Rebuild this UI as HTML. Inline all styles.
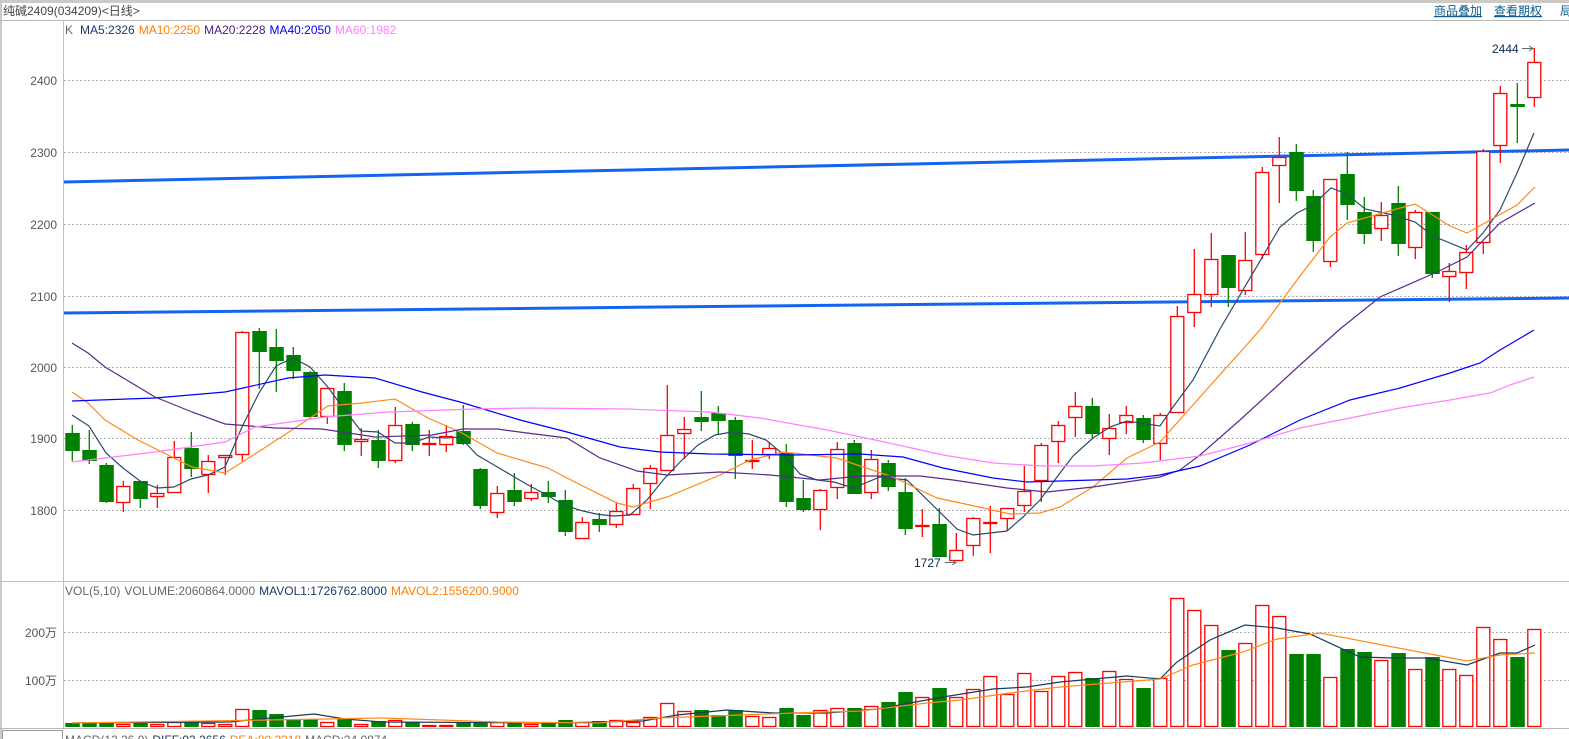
<!DOCTYPE html>
<html><head><meta charset="utf-8"><style>
html,body{margin:0;padding:0;background:#fff;width:1569px;height:739px;overflow:hidden;font-family:"Liberation Sans","Noto Sans CJK SC",sans-serif;}
svg text{font-family:"Liberation Sans","Noto Sans CJK SC",sans-serif;}
</style></head><body>
<svg id="s" width="1569" height="739" xmlns="http://www.w3.org/2000/svg" style="position:absolute;left:0;top:0">
<rect x="0" y="0" width="1569" height="3" fill="#cdc9c5"/>
<rect x="0" y="0" width="2" height="739" fill="#cdc9c5"/>
<line x1="0" y1="20.5" x2="1569" y2="20.5" stroke="#b8b8b8"/>
<text x="3" y="15" font-size="12" fill="#444">纯碱2409(034209)&lt;日线&gt;</text>
<text x="1434" y="15" font-size="12" fill="#0b5b8c" text-decoration="underline">商品叠加</text>
<text x="1494" y="15" font-size="12" fill="#0b5b8c" text-decoration="underline">查看期权</text>
<text x="1560" y="15" font-size="12" fill="#0b5b8c">局</text>
<line x1="63.5" y1="21" x2="63.5" y2="729" stroke="#c0c0c0"/>
<line x1="0" y1="581.5" x2="1569" y2="581.5" stroke="#c0c0c0"/>
<line x1="0" y1="728.5" x2="1569" y2="728.5" stroke="#b8b8b8"/>
<rect x="2.5" y="730.5" width="60" height="12" fill="none" stroke="#999"/>
<text x="65" y="34" font-size="12"><tspan fill="#666">K</tspan><tspan fill="#1a3a6a" dx="7">MA5:2326</tspan><tspan fill="#ff8000" dx="4">MA10:2250</tspan><tspan fill="#4b1a82" dx="4">MA20:2228</tspan><tspan fill="#0000ee" dx="4">MA40:2050</tspan><tspan fill="#ff80ff" dx="4">MA60:1982</tspan></text>
<text x="65" y="595" font-size="12"><tspan fill="#666">VOL(5,10)</tspan><tspan fill="#666" dx="4">VOLUME:2060864.0000</tspan><tspan fill="#1a3a6a" dx="4">MAVOL1:1726762.8000</tspan><tspan fill="#ff8000" dx="4">MAVOL2:1556200.9000</tspan></text>
<text x="65" y="744" font-size="12"><tspan fill="#666">MACD(12,26,9)</tspan><tspan fill="#1a3a6a" dx="4">DIFF:93.2656</tspan><tspan fill="#ff8000" dx="4">DEA:80.2318</tspan><tspan fill="#666" dx="4">MACD:24.0874</tspan></text>
<g id="g"></g>
</svg>
<script>
var g=document.getElementById('g');var h='';
function L(x1,y1,x2,y2,c,w,d){h+='<line x1="'+x1+'" y1="'+y1+'" x2="'+x2+'" y2="'+y2+'" stroke="'+c+'" stroke-width="'+(w||1)+'"'+(d?' stroke-dasharray="'+d+'"':'')+'/>';}
// grid
[[80,'2400'],[152,'2300'],[224,'2200'],[296,'2100'],[367,'2000'],[438,'1900'],[510,'1800']].forEach(function(a){L(64,a[0]+.5,1569,a[0]+.5,'#b0b0b0',1,'2,2');h+='<text x="57" y="'+(a[0]+5)+'" font-size="12" fill="#555" text-anchor="end">'+a[1]+'</text>';});
[[632,'200万'],[680,'100万']].forEach(function(a){L(64,a[0]+.5,1569,a[0]+.5,'#b0b0b0',1,'2,2');h+='<text x="57" y="'+(a[0]+5)+'" font-size="12" fill="#555" text-anchor="end">'+a[1]+'</text>';});
// trend lines
L(64,182,1569,150,'#1464f0',3);L(64,313,1569,298,'#1464f0',3);
// candles: [color, wickTop, bodyTop, bodyBot, wickBot]
var C=[['G',425,433,451,461],['G',430,450,461,464],['G',463,465,502,503],['R',481,486,503,512],['G',481,481,499,508],['R',485,493,497,508],['R',441,457,493,493],['G',432,448,469,477],['R',455,461,475,493],['R',455,455,458,475],
['R',331,332,455,461],['G',328,331,352,389],['G',329,347,361,392],['G',347,355,371,379],['G',371,372,417,417],['R',388,388,417,424],['G',383,391,445,451],['R',428,439,442,456],['G',430,440,461,468],['R',407,425,461,463],
['G',422,424,445,451],['R',430,443,445,456],['R',425,436,445,452],['G',405,431,444,445],['G',468,469,506,509],['R',486,493,513,518],['G',473,490,502,506],['R',484,492,499,501],['G',481,492,497,503],['G',490,500,532,536],
['R',517,522,539,539],['G',513,519,525,532],['R',502,511,525,528],['R',484,488,515,515],['R',465,468,484,509],['R',385,435,471,471],['R',417,429,434,459],['G',391,417,422,431],['G',406,413,421,435],['G',417,420,456,479],
['R',440,460,462,469],['R',442,448,455,459],['G',444,453,502,507],['G',480,498,510,512],['R',489,490,510,530],['R',442,449,488,499],['G',440,443,494,494],['R',450,459,493,499],['G',460,463,487,491],['G',478,492,529,535],
['R',509,525,527,537],['G',508,524,557,557],['R',533,550,561,561],['R',517,518,546,556],['R',506,522,524,553],['R',508,508,519,531],['R',466,491,506,512],['R',443,445,481,502],['R',421,425,442,463],['R',392,406,418,437],
['G',398,406,434,439],['R',414,428,439,455],['R',406,415,423,434],['G',415,418,440,443],['R',413,415,444,460],['R',306,316,413,413],['R',249,294,313,327],['R',233,259,295,307],['G',255,255,288,307],['R',232,260,291,295],
['R',167,172,255,259],['R',137,157,166,203],['G',144,152,191,201],['G',190,196,241,252],['R',179,179,262,267],['G',152,174,205,220],['G',197,212,234,244],['R',202,215,229,241],['G',186,203,244,256],['R',210,212,248,259],
['G',212,212,274,278],['R',263,271,277,302],['R',245,252,273,289],['R',149,151,243,254],['R',86,93,146,163],['G',83,104,107,143],['R',48,62,98,107]];
var V=[723,723,722,724,723,724,722,721,723,724,709,710,714,719,719,722,719,724,721,720,722,725,725,723,723,722,723,724,723,720,
722,721,720,722,717,703,711,710,715,710,716,717,708,715,710,708,708,706,702,692,697,688,697,689,676,694,673,691,676,672,
678,671,679,688,678,598,610,625,650,643,605,616,654,654,677,649,652,660,653,669,657,669,675,627,639,657,629];
var RED='#ff0000',GRN='#008000';
for(var i=0;i<C.length;i++){var c=C[i],x=72.3+17*i,col=c[0]=='R'?RED:GRN,bx=x-7;
 L(x,c[1],x,c[4],col,1.3);
 var bh=Math.max(c[3]-c[2],2);
 if(c[0]=='R'){h+='<rect x="'+(bx+.5)+'" y="'+(c[2]+.5)+'" width="13" height="'+(bh-1)+'" fill="#fff" stroke="'+RED+'" stroke-width="1.3"/>';}
 else{h+='<rect x="'+bx+'" y="'+c[2]+'" width="14.5" height="'+bh+'" fill="'+GRN+'"/>';}
 var vt=V[i];
 if(c[0]=='R'){h+='<rect x="'+(bx+.5)+'" y="'+(vt+.5)+'" width="13" height="'+(727-vt-1)+'" fill="#fff" stroke="'+RED+'" stroke-width="1.3"/>';}
 else{h+='<rect x="'+bx+'" y="'+vt+'" width="14.5" height="'+(727-vt)+'" fill="'+GRN+'"/>';}
}
function P(pts,col,w){h+='<polyline fill="none" stroke="'+col+'" stroke-width="'+(w||1.2)+'" points="'+pts+'"/>';}
P('72,415 89,426 106,453 123,468 140,481 157,488 174,487 191,479 208,475 225,467 242,427 259,393 276,366 293,358 310,367 327,386 344,409 361,431 378,432 395,443 412,443 429,437 446,438 460,437 477,455 494,465 511,475 528,485 545,494 562,504 579,510 596,514 613,516 630,515 647,500 664,479 681,461 698,445 715,435 732,432 749,434 766,440 783,454 800,474 817,480 834,482 853,488 880,477 907,480 957,529 973,535 1007,531 1023,517 1040,500 1057,477 1073,456 1093,438 1110,427 1127,421 1160,426 1173,407 1193,380 1220,329 1280,227 1297,213 1313,205 1331,188 1347,194 1365,209 1393,215 1415,222 1433,236 1467,250 1483,233 1500,210 1517,173 1534,133','#2a4a6a');
P('72,392 88,403 105,420 138,440 192,467 225,473 258,452 292,430 328,406 362,403 395,399 428,418 460,432 497,453 548,468 567,478 617,503 633,507 667,497 720,475 750,460 783,452 837,458 860,466 893,477 937,498 970,505 1010,514 1040,513 1060,507 1093,487 1127,458 1160,442 1200,397 1260,330 1297,280 1330,237 1347,223 1393,210 1415,204 1450,226 1467,233 1517,205 1535,187','#ff8a1a');
P('72,343 88,353 105,367 155,397 192,412 225,424 275,428 322,429 375,437 432,435 463,429 497,429 527,433 567,438 600,458 637,471 667,475 720,472 770,475 820,480 860,476 920,476 953,480 1007,488 1047,492 1093,487 1160,477 1180,470 1200,455 1240,420 1300,365 1340,329 1380,297 1437,272 1467,257 1500,223 1535,203','#5a2a8a');
P('72,401 155,398 225,392 288,378 325,375 375,378 422,392 460,402 520,420 567,432 620,447 660,452 710,454 793,455 860,454 903,457 943,468 993,478 1027,482 1060,481 1127,479 1160,475 1200,466 1250,445 1300,420 1350,400 1400,388 1450,373 1480,363 1500,350 1534,330','#0000ff');
P('72,462 155,452 225,442 255,427 325,417 388,412 475,409 527,408 627,409 710,412 760,418 827,430 880,441 943,455 993,463 1043,466 1093,466 1143,463 1200,456 1250,443 1300,428 1350,418 1400,408 1450,400 1490,393 1510,385 1534,377','#ff80ff');
P('72,723 230,722 249,720 314,714 345,719 383,722 560,723 643,721 677,715 727,710 773,713 827,713 877,709 910,703 943,697 993,689 1027,687 1060,682 1127,676 1160,679 1177,662 1210,640 1245,625 1277,628 1310,634 1360,657 1393,658 1427,658 1467,665 1500,653 1517,653 1535,645','#1a3a5a');
P('72,723 268,720 383,718 498,722 597,723 660,718 793,713 860,711 927,703 960,700 1010,693 1060,687 1160,679 1193,665 1243,652 1277,639 1320,633 1393,647 1467,661 1500,655 1535,653','#ff8a1a');
h+='<text x="1492" y="53" font-size="12" font-family="Liberation Mono,monospace" fill="#0a2a55">2444</text>';
L(1522,48.5,1532,48.5,'#666',1);h+='<path d="M1529,46 L1533,48.5 L1529,51" fill="none" stroke="#666"/>';
h+='<text x="914" y="567" font-size="12" font-family="Liberation Mono,monospace" fill="#0a2a55">1727</text>';
L(945,562.5,955,562.5,'#666',1);h+='<path d="M952,560 L956,562.5 L952,565" fill="none" stroke="#666"/>';
g.innerHTML=h;
</script>
</body></html>
